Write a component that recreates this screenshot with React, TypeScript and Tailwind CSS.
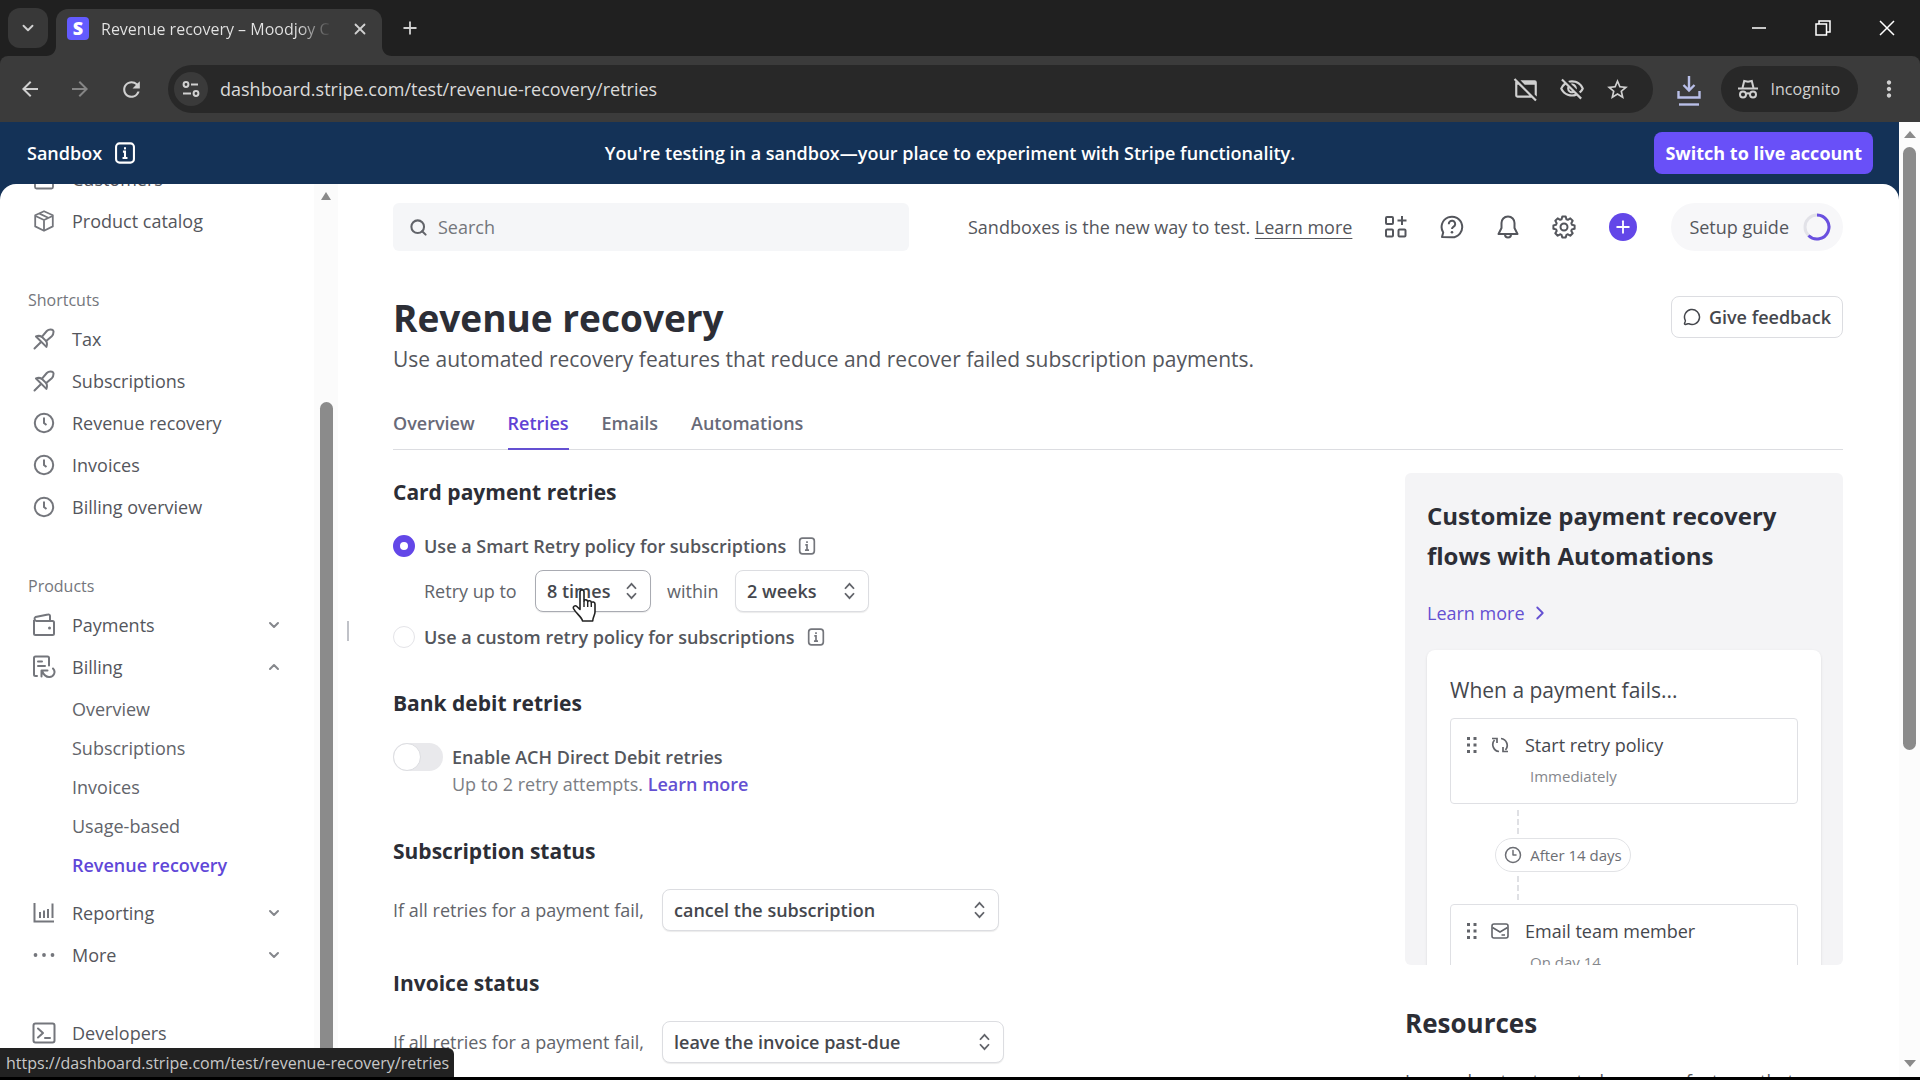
import React from "react";
import {
  MdArrowBack,
  MdArrowForward,
  MdRefresh,
  MdWebAssetOff,
  MdOutlineVisibilityOff,
  MdStarOutline,
  MdMoreVert,
} from "react-icons/md";
import { ChevronDown, ChevronRight, ChevronUp, Clock3, MessageCircle, Plus, Search, X } from "lucide-react";

type IconProps = { className?: string };

function InfoIcon({ className = "" }: IconProps) {
  return (
    <svg viewBox="0 0 16 16" fill="none" stroke="currentColor" strokeWidth="1.5" className={className}>
      <rect x="1.5" y="1" width="13" height="14" rx="2.5" />
      <path d="M6.5 7H8v4.5M6.2 11.7h3.6" />
      <path d="M8 3.8v1.6" />
    </svg>
  );
}

function BoxIcon() {
  return (
    <svg viewBox="0 0 22 22" fill="none" stroke="currentColor" strokeWidth="1.8" strokeLinejoin="round" className="h-[22px] w-[22px]">
      <path d="M11 1.2l8.8 4v11.2L11 20.8l-8.8-4.4V5.2z" />
      <path d="M2.5 6L11 10l8.5-4M11 10v10.5M6.5 3.6l8.7 4.2" />
    </svg>
  );
}

function PersonIcon() {
  return (
    <svg viewBox="0 0 22 22" fill="none" stroke="currentColor" strokeWidth="1.8" className="h-[22px] w-[22px]">
      <circle cx="11" cy="6" r="4" />
      <path d="M2 14v5a1.5 1.5 0 001.5 1.5h15A1.5 1.5 0 0020 19v-5" />
    </svg>
  );
}

function PinIcon() {
  return (
    <svg viewBox="0 0 22 22" fill="none" stroke="currentColor" strokeWidth="2" strokeLinejoin="round" strokeLinecap="round" className="h-[22px] w-[22px]">
      <path d="M1.5 20.5l6.3-6.3" />
      <path d="M3 8.500c2-.9 4-.8 5.800.3l5-5.800c1.400-1.400 3.400-1.800 5.300-1.300.9.3 1.300.8 1.400 1.600.1 1.900-.3 3.600-1.700 4.900l-5.600 4.900c1 1.800 1 3.700.2 5.800z" />
      <path d="M8.800 8.800l4.400 4.300" />
    </svg>
  );
}

function ClockIcon() {
  return (
    <svg viewBox="0 0 22 22" fill="none" stroke="currentColor" strokeWidth="2" className="h-[22px] w-[22px]">
      <circle cx="11" cy="11" r="9.2" />
      <path d="M11 5.5V11l2.5 2" />
    </svg>
  );
}

function WalletIcon() {
  return (
    <svg viewBox="0 0 24 24" fill="none" stroke="currentColor" strokeWidth="2" strokeLinejoin="round" className="h-6 w-6">
      <path d="M2 7v13.500A1.500 1.500 0 003.500 22h17a1.500 1.500 0 001.500-1.500V9.500A1.500 1.500 0 0020.500 8H4.500A2.200 2.200 0 013.500 4L16 1.500a1.500 1.500 0 012 1.500v5" />
      <circle cx="17.5" cy="15" r="1.5" fill="currentColor" stroke="none" />
    </svg>
  );
}

function BillingIcon() {
  return (
    <svg viewBox="0 0 24 24" fill="none" stroke="currentColor" strokeWidth="2" strokeLinecap="round" strokeLinejoin="round" className="h-6 w-6">
      <path d="M5 21H3.500A1.500 1.500 0 012 19.500V3a1.500 1.500 0 011.500-1.500h12A1.500 1.500 0 0117 3v7.500" />
      <path d="M6 6.5h4M6 11h7" />
      <path d="M9.5 21.5v-6h6M10 16c1.500 3.500 3.500 6 7 6a5 5 0 004-8.500" />
    </svg>
  );
}

function ReportIcon() {
  return (
    <svg viewBox="0 0 22 22" fill="none" stroke="currentColor" strokeWidth="2" className="h-[22px] w-[22px]">
      <path d="M1.5 1v18.500H21M7 16v-6M11 16V8.500M15 16V7M19.500 16V1.500" />
    </svg>
  );
}

function DotsIcon() {
  return (
    <svg viewBox="0 0 22 22" fill="currentColor" className="h-[22px] w-[22px]">
      <circle cx="2.5" cy="11" r="1.9" />
      <circle cx="11" cy="11" r="1.9" />
      <circle cx="19.5" cy="11" r="1.9" />
    </svg>
  );
}

function TerminalIcon() {
  return (
    <svg viewBox="0 0 24 24" fill="none" stroke="currentColor" strokeWidth="2" strokeLinecap="round" strokeLinejoin="round" className="h-6 w-6">
      <rect x="1.5" y="2.5" width="21" height="19" rx="2" />
      <path d="M6 7.5l5 4.5-5 4.5M13 17h5" />
    </svg>
  );
}

function AppsIcon() {
  return (
    <svg viewBox="0 0 24 24" fill="none" stroke="currentColor" strokeWidth="2" className="h-6 w-6">
      <rect x="2" y="2" width="7" height="7" rx="1" />
      <rect x="2" y="14.5" width="7" height="7" rx="1" />
      <rect x="14.5" y="14.5" width="7" height="7" rx="1" />
      <path d="M18 1v9M13.5 5.500h9" />
    </svg>
  );
}

function HelpIcon() {
  return (
    <svg viewBox="0 0 24 24" fill="none" stroke="currentColor" strokeWidth="2" strokeLinejoin="round" className="h-6 w-6">
      <path d="M2 22l1.200-4.500A10.300 10.300 0 1112 22.300z" />
      <path d="M8.800 9.200a3.200 3.200 0 116 1.300c-.6 1.200-2.800 1.500-2.800 3.500" />
      <circle cx="12" cy="17.3" r="1.3" fill="currentColor" stroke="none" />
    </svg>
  );
}

function BellIcon() {
  return (
    <svg viewBox="0 0 24 24" fill="none" stroke="currentColor" strokeWidth="2" strokeLinejoin="round" className="h-6 w-6">
      <path d="M12 1.500c-4 0-6.500 3-6.500 6.500v5L2.500 19h19l-3-6V8c0-3.500-2.500-6.500-6.500-6.500z" />
      <path d="M9 19.5a3 3 0 006 0" />
    </svg>
  );
}

function GearIcon() {
  return (
    <svg viewBox="0 0 24 24" fill="none" stroke="currentColor" strokeWidth="2" strokeLinejoin="round" className="h-6 w-6">
      <path d="M10.300 1.500h3.400l.7 2.700 1.500.6 2.400-1.400 2.400 2.400-1.400 2.400.6 1.500 2.700.7v3.300l-2.700.7-.6 1.500 1.400 2.400-2.400 2.400-2.400-1.400-1.500.6-.7 2.700h-3.400l-.7-2.700-1.500-.6-2.400 1.400-2.400-2.400 1.400-2.400-.6-1.500-2.700-.7v-3.300l2.700-.7.6-1.500-1.400-2.400 2.400-2.400 2.400 1.400 1.500-.6z" />
      <circle cx="12" cy="12" r="3.5" />
    </svg>
  );
}

function SortIcon({ className = "" }: IconProps) {
  return (
    <svg viewBox="0 0 14 20" fill="none" stroke="currentColor" strokeWidth="2" className={className}>
      <path d="M2 7.5L7 2l5 5.500M2 12.500L7 18l5-5.500" />
    </svg>
  );
}

function GripIcon() {
  return (
    <svg viewBox="0 0 10 16" fill="currentColor" className="h-4 w-[10px]">
      <path d="M0 0h3v3H0zM6.500 0h3v3h-3zM0 6.500h3v3H0zM6.500 6.500h3v3h-3zM0 13h3v3H0zM6.500 13h3v3h-3z" />
    </svg>
  );
}

function RetryIcon() {
  return (
    <svg viewBox="0 0 18 18" fill="none" stroke="currentColor" strokeWidth="1.7" className="h-[18px] w-[18px]">
      <path d="M8 15.500A7 7 0 013.500 4M1 2.500h5V7M10 2.500A7 7 0 0114.500 14M17 15.500h-5V11" />
    </svg>
  );
}

function MailIcon() {
  return (
    <svg viewBox="0 0 18 18" fill="none" stroke="currentColor" strokeWidth="1.6" className="h-[18px] w-[18px]">
      <rect x="1" y="2" width="16" height="14" rx="2" />
      <path d="M1.5 5.500L9 10l7.500-4.500M10.500 13H14" />
    </svg>
  );
}

function IncognitoIcon() {
  return (
    <svg viewBox="0 0 22 22" fill="none" stroke="currentColor" strokeWidth="2" className="h-[22px] w-[22px]">
      <path d="M1 10.500h20" />
      <path d="M5.500 10L7.200 3l3.800.8 3.800-.8 1.700 7" />
      <circle cx="6" cy="16.5" r="3" />
      <circle cx="16" cy="16.5" r="3" />
      <path d="M9 16c1.300-.9 2.700-.9 4 0" />
    </svg>
  );
}

function HandCursor() {
  return (
    <svg viewBox="0 0 26 34" className="pointer-events-none absolute top-[19px] left-[37px] h-[34px] w-[26px]">
      <path
        d="M8 3c0-2.600 4-2.600 4 0v9c.6-1.800 3.600-1.500 3.700.6.8-1.400 3.500-1 3.600 1 1-1.200 3.700-.7 3.700 1.500V23c0 3-2 4.500-2.300 9H10.500C10 28 3.500 24 1.500 19.500c-.8-2.200 1.700-3.600 3.400-2L8 20.500z"
        fill="#fff"
        stroke="#222"
        strokeWidth="1.6"
        strokeLinejoin="round"
      />
      <path d="M12 12v6M15.700 13v5M19.300 14v4" stroke="#222" strokeWidth="1.4" />
    </svg>
  );
}

function BrowserChrome() {
  return (
    <header className="shrink-0 bg-[#202020] text-[#d0d0d0]">
      <div className="flex h-14 items-end">
        <button aria-label="Search tabs" className="mb-2 ml-2 flex h-10 w-10 items-center justify-center rounded-xl bg-[#383838]">
          <ChevronDown size={18} strokeWidth={2.5} />
        </button>
        <div className="relative ml-2 flex h-[47px] w-[326px] items-center rounded-t-xl bg-[#3b3b3b] pr-[13px] pb-2 pl-[11px]">
          <svg viewBox="0 0 10 10" className="absolute bottom-0 -left-[10px] h-[10px] w-[10px] fill-[#3b3b3b]">
            <path d="M10 0v10H0C6 10 10 6 10 0z" />
          </svg>
          <svg viewBox="0 0 10 10" className="absolute -right-[10px] bottom-0 h-[10px] w-[10px] fill-[#3b3b3b]">
            <path d="M0 0v10h10C4 10 0 6 0 0z" />
          </svg>
          <span className="flex h-[23px] w-[22px] items-center justify-center rounded-sm bg-[#635bff] text-[18px] font-extrabold text-white">S</span>
          <span className="ml-3 w-[232px] overflow-hidden bg-linear-to-r from-[#e4e4e4] from-85% to-[#3b3b3b] bg-clip-text text-[16px] whitespace-nowrap text-transparent">
            Revenue recovery – Moodjoy C
          </span>
          <button aria-label="Close tab" className="ml-auto">
            <X size={18} strokeWidth={2.4} />
          </button>
        </div>
        <button aria-label="New tab" className="mb-[18px] ml-[18px]">
          <Plus size={20} strokeWidth={2.2} />
        </button>
        <div className="mb-[19px] ml-auto flex items-center gap-[46px] pr-6">
          <button aria-label="Minimize">
            <svg viewBox="0 0 18 18" stroke="#fff" strokeWidth="1.5" className="h-[18px] w-[18px]">
              <path d="M2 9h14" />
            </svg>
          </button>
          <button aria-label="Restore">
            <svg viewBox="0 0 18 18" fill="none" stroke="#fff" strokeWidth="1.5" className="h-[18px] w-[18px]">
              <path d="M2 5h10.500v11H2zM5 5V2h11v11h-3.500" />
            </svg>
          </button>
          <button aria-label="Close window">
            <svg viewBox="0 0 18 18" stroke="#fff" strokeWidth="1.5" className="h-[18px] w-[18px]">
              <path d="M2 2l14 14M16 2L2 16" />
            </svg>
          </button>
        </div>
      </div>
      <div className="flex h-[66px] items-center rounded-t-lg bg-[#3b3b3b] pr-[18px] pl-[18px]">
        <button aria-label="Back">
          <MdArrowBack size={24} />
        </button>
        <button aria-label="Forward" className="ml-[26px] text-[#858585]">
          <MdArrowForward size={24} />
        </button>
        <button aria-label="Reload" className="ml-[27px]">
          <MdRefresh size={25} />
        </button>
        <div className="ml-6 flex h-12 flex-1 items-center rounded-full bg-[#282828] pr-[23px] pl-[6px]">
          <span className="flex h-[34px] w-[34px] items-center justify-center rounded-full bg-[#3a3a3a]">
            <svg viewBox="0 0 20 20" fill="none" stroke="currentColor" strokeWidth="2" className="h-5 w-5">
              <circle cx="5" cy="5.5" r="2.4" />
              <path d="M10 5.500h7M2 14.500h8" />
              <circle cx="15" cy="14.5" r="2.4" />
            </svg>
          </span>
          <input
            type="text"
            aria-label="Address"
            defaultValue="dashboard.stripe.com/test/revenue-recovery/retries"
            className="ml-3 flex-1 bg-transparent text-[18px] text-[#dadada] outline-none"
          />
          <div className="flex items-center gap-5">
            <MdWebAssetOff size={26} />
            <MdOutlineVisibilityOff size={26} />
            <MdStarOutline size={25} />
          </div>
        </div>
        <button aria-label="Downloads" className="ml-6 text-[#b9bfe8]">
          <svg viewBox="0 0 24 30" fill="none" stroke="currentColor" strokeWidth="2.4" className="mt-1 h-[30px] w-6">
            <path d="M12 0v14M6.500 9l5.500 5.500L17.500 9M1.500 15v6.500h21V15" />
            <path d="M2 28.500h20" />
          </svg>
        </button>
        <span className="ml-5 flex h-[46px] items-center gap-3 rounded-full bg-[#282828] pr-[18px] pl-4 text-[16px]">
          <IncognitoIcon />
          Incognito
        </span>
        <button aria-label="Menu" className="ml-[18px]">
          <MdMoreVert size={26} />
        </button>
      </div>
    </header>
  );
}

const shortcuts = [
  { label: "Tax", icon: <PinIcon /> },
  { label: "Subscriptions", icon: <PinIcon /> },
  { label: "Revenue recovery", icon: <ClockIcon /> },
  { label: "Invoices", icon: <ClockIcon /> },
  { label: "Billing overview", icon: <ClockIcon /> },
];

const billingLinks = ["Overview", "Subscriptions", "Invoices", "Usage-based", "Revenue recovery"];

function NavItem({ label, icon, open }: { label: string; icon: React.ReactNode; open?: boolean }) {
  return (
    <a href="#" className="flex h-[42px] items-center pr-8 text-[18px] text-[#54565c]">
      <span className="mr-4 flex w-6 justify-center text-[#74767c]">{icon}</span>
      {label}
      {open === false && <ChevronDown size={16} strokeWidth={3} className="ml-auto text-[#85878c]" />}
      {open === true && <ChevronUp size={16} strokeWidth={3} className="ml-auto text-[#85878c]" />}
    </a>
  );
}

function Sidebar() {
  return (
    <aside className="flex w-[338px] shrink-0">
      <nav className="-mt-[26px] flex-1 pl-8">
        <NavItem label="Customers" icon={<PersonIcon />} />
        <NavItem label="Product catalog" icon={<BoxIcon />} />
        <h2 className="mt-10 -ml-1 flex h-9 items-center text-[16px] text-[#74767c]">Shortcuts</h2>
        {shortcuts.map((s) => (
          <NavItem key={s.label} label={s.label} icon={s.icon} />
        ))}
        <h2 className="mt-10 -ml-1 flex h-9 items-center text-[16px] text-[#74767c]">Products</h2>
        <NavItem label="Payments" icon={<WalletIcon />} open={false} />
        <NavItem label="Billing" icon={<BillingIcon />} open={true} />
        <div className="pt-0.5 pb-[7px] pl-10">
          {billingLinks.map((label) => (
            <a
              key={label}
              href="#"
              className={
                label === "Revenue recovery"
                  ? "flex h-[39px] items-center text-[18px] font-semibold text-[#6047d8]"
                  : "flex h-[39px] items-center text-[18px] text-[#62646a]"
              }
            >
              {label}
            </a>
          ))}
        </div>
        <NavItem label="Reporting" icon={<ReportIcon />} open={false} />
        <NavItem label="More" icon={<DotsIcon />} open={false} />
        <div className="mt-9">
          <NavItem label="Developers" icon={<TerminalIcon />} />
        </div>
      </nav>
      <div className="flex w-6 flex-col items-center bg-[#fbfbfb] pt-2">
        <svg viewBox="0 0 10 8" className="h-2 w-[10px] fill-[#8a8a8a]">
          <path d="M5 0l5 8H0z" />
        </svg>
        <div className="mt-[202px] w-[13px] flex-1 rounded-t-full bg-[#8b8b8b]" />
      </div>
    </aside>
  );
}

function TopBar() {
  return (
    <div className="flex h-12 items-center text-[#54565c]">
      <label className="flex h-12 w-[516px] items-center rounded-md bg-[#f5f6f8] px-4">
        <Search size={19} strokeWidth={2.6} className="text-[#62646a]" />
        <input type="search" placeholder="Search" aria-label="Search" className="ml-[10px] flex-1 bg-transparent text-[18px] outline-none placeholder:text-[#74767c]" />
      </label>
      <p className="ml-auto text-[18px] whitespace-nowrap">
        Sandboxes is the new way to test.{" "}
        <a href="#" className="underline underline-offset-4">
          Learn more
        </a>
      </p>
      <div className="ml-8 flex items-center gap-8">
        <button aria-label="Apps">
          <AppsIcon />
        </button>
        <button aria-label="Help">
          <HelpIcon />
        </button>
        <button aria-label="Notifications">
          <BellIcon />
        </button>
        <button aria-label="Settings">
          <GearIcon />
        </button>
      </div>
      <button aria-label="Create" className="ml-[33px] flex h-7 w-7 items-center justify-center rounded-full bg-[#6347e8] text-white">
        <Plus size={20} strokeWidth={2.2} />
      </button>
      <button className="ml-[34px] flex h-12 items-center gap-[14px] rounded-full bg-[#f7f7f9] pr-3 pl-[18px] text-[18px] whitespace-nowrap">
        Setup guide
        <svg viewBox="0 0 28 28" fill="none" strokeWidth="3" className="h-7 w-7">
          <circle cx="14" cy="14" r="12" stroke="#e2e2e8" />
          <path d="M14 2a12 12 0 11-8.500 20.500" stroke="#6a50e0" />
        </svg>
      </button>
    </div>
  );
}

type PickerProps = { id: string; label: string; options: string[]; width: string; hover?: boolean };

function Picker({ id, label, options, width, hover }: PickerProps) {
  return (
    <div className={`relative grid ${width}`}>
      <select
        id={id}
        aria-label={label}
        className={`col-start-1 row-start-1 h-[42px] w-full appearance-none rounded-lg border bg-white pl-[11px] text-[18px] font-semibold text-[#45474d] shadow-[0_1px_1px_rgba(0,0,0,0.08)] ${
          hover ? "border-[#a9abb2]" : "border-[#dcdde1]"
        }`}
      >
        {options.map((o) => (
          <option key={o}>{o}</option>
        ))}
      </select>
      <SortIcon className="pointer-events-none col-start-1 row-start-1 mr-[13px] h-[18px] w-[13px] self-center justify-self-end text-[#62646a]" />
      {hover && <HandCursor />}
    </div>
  );
}

const radioClass =
  "h-[22px] w-[22px] shrink-0 appearance-none rounded-full border border-[#e4e4e8] bg-white checked:border-[7px] checked:border-[#6347e8]";

function RetrySettings() {
  return (
    <div className="flex-1 pt-6 text-[18px] text-[#54565c]">
      <h2 className="text-[21px] leading-9 font-bold text-[#2c2e36]">Card payment retries</h2>
      <div className="mt-6 flex h-6 items-center">
        <input type="radio" name="policy" id="smart" defaultChecked className={radioClass} />
        <label htmlFor="smart" className="ml-[9px] font-semibold text-[#54565c]">
          Use a Smart Retry policy for subscriptions
        </label>
        <InfoIcon className="ml-3 h-[18px] w-[18px] text-[#74767c]" />
      </div>
      <div className="mt-3 flex items-center pl-[31px]">
        <label htmlFor="times" className="w-[111px] text-[#62646a]">
          Retry up to
        </label>
        <Picker id="times" label="Retry up to" options={["8 times", "4 times"]} width="w-[116px]" hover />
        <label htmlFor="weeks" className="w-[84px] pl-4 text-[#62646a]">
          within
        </label>
        <Picker id="weeks" label="within" options={["2 weeks", "1 week"]} width="w-[134px]" />
      </div>
      <div className="mt-[13px] flex h-6 items-center">
        <input type="radio" name="policy" id="custom" className={radioClass} />
        <label htmlFor="custom" className="ml-[9px] font-semibold text-[#54565c]">
          Use a custom retry policy for subscriptions
        </label>
        <InfoIcon className="ml-3 h-[18px] w-[18px] text-[#74767c]" />
      </div>

      <h2 className="mt-9 text-[21px] leading-9 font-bold text-[#2c2e36]">Bank debit retries</h2>
      <div className="mt-[22px] flex">
        <input
          type="checkbox"
          role="switch"
          id="ach"
          className="h-7 w-[50px] shrink-0 appearance-none rounded-full bg-[#e9e9ec] before:block before:h-7 before:w-7 before:rounded-full before:border before:border-[#dcdde1] before:bg-white checked:before:ml-auto"
        />
        <div className="ml-[9px]">
          <label htmlFor="ach" className="block leading-7 font-semibold text-[#54565c]">
            Enable ACH Direct Debit retries
          </label>
          <p className="leading-[26px] text-[#7c7e84]">
            Up to 2 retry attempts.{" "}
            <a href="#" className="font-semibold text-[#6450d2]">
              Learn more
            </a>
          </p>
        </div>
      </div>

      <h2 className="mt-9 text-[21px] leading-9 font-bold text-[#2c2e36]">Subscription status</h2>
      <div className="mt-5 flex items-center">
        <label htmlFor="sub" className="w-[269px] whitespace-nowrap text-[#62646a]">
          If all retries for a payment fail,
        </label>
        <Picker id="sub" label="Subscription status" options={["cancel the subscription", "mark as unpaid"]} width="w-[337px]" />
      </div>

      <h2 className="mt-[34px] text-[21px] leading-9 font-bold text-[#2c2e36]">Invoice status</h2>
      <div className="mt-5 flex items-center">
        <label htmlFor="inv" className="w-[269px] whitespace-nowrap text-[#62646a]">
          If all retries for a payment fail,
        </label>
        <Picker id="inv" label="Invoice status" options={["leave the invoice past-due", "mark as uncollectible"]} width="w-[342px]" />
      </div>
    </div>
  );
}

function StepCard({ icon, title, when }: { icon: React.ReactNode; title: string; when: string }) {
  return (
    <div className="h-[86px] rounded border border-[#dfe0e4] px-4 pt-[10px]">
      <div className="flex h-8 items-center text-[#62646a]">
        <GripIcon />
        <span className="mr-4 ml-[14px]">{icon}</span>
        <span className="text-[18px] text-[#45474d]">{title}</span>
      </div>
      <p className="ml-[63px] text-[15px] leading-[30px] text-[#85878c]">{when}</p>
    </div>
  );
}

function Aside() {
  return (
    <aside className="w-[438px] shrink-0 pt-[23px]">
      <div className="h-[492px] overflow-hidden rounded-md bg-[#f4f4f6] px-[22px] pt-[23px]">
        <h2 className="text-[24px] leading-10 font-bold text-[#2c2e36]">Customize payment recovery flows with Automations</h2>
        <a href="#" className="mt-[21px] flex items-center gap-1 text-[18px] leading-8 text-[#6450d2]">
          Learn more
          <ChevronRight size={22} />
        </a>
        <div className="mt-[21px] rounded-t-lg bg-white px-[23px] pt-6 shadow-sm">
          <h3 className="text-[21px] leading-8 font-medium text-[#45474d]">When a payment fails...</h3>
          <div className="mt-3">
            <StepCard icon={<RetryIcon />} title="Start retry policy" when="Immediately" />
          </div>
          <div className="mt-[6px] ml-[67px] h-6 border-l-2 border-dashed border-[#dfe0e4]" />
          <span className="my-1 ml-[45px] flex h-[34px] w-[136px] items-center justify-center gap-2 rounded-full border border-[#e2e3e6] text-[15px] whitespace-nowrap text-[#6c6e74]">
            <Clock3 size={18} />
            After 14 days
          </span>
          <div className="mb-1 ml-[67px] h-6 border-l-2 border-dashed border-[#dfe0e4]" />
          <StepCard icon={<MailIcon />} title="Email team member" when="On day 14" />
        </div>
      </div>
      <h2 className="mt-10 text-[26px] leading-9 font-bold text-[#2c2e36]">Resources</h2>
      <p className="mt-7 text-[18px] leading-6 whitespace-nowrap text-[#54565c]">Learn about automated recovery features that</p>
    </aside>
  );
}

function RevenueRecovery() {
  return (
    <main className="min-w-0 flex-1 pt-[19px] pr-14 pl-[35px]">
      <TopBar />
      <div className="mt-[43px] flex items-start">
        <div className="flex-1">
          <h1 className="text-[37px] leading-[48px] font-bold text-[#2c2e36]">Revenue recovery</h1>
          <p className="mt-0.5 text-[21px] leading-[30px] text-[#54565c]">Use automated recovery features that reduce and recover failed subscription payments.</p>
        </div>
        <button className="mt-0.5 flex h-[42px] items-center gap-2 rounded-lg border border-[#dcdde1] px-[11px] text-[18px] font-semibold whitespace-nowrap text-[#45474d]">
          <MessageCircle size={18} />
          Give feedback
        </button>
      </div>
      <nav className="mt-[34px] flex h-[42px] gap-[33px] border-b border-[#dcdde1] text-[18px] font-semibold text-[#686a78]">
        <a href="#" className="leading-[30px]">Overview</a>
        <a href="#" className="h-[42px] border-b-2 border-[#6450d2] leading-[30px] text-[#6042d4]">Retries</a>
        <a href="#" className="leading-[30px]">Emails</a>
        <a href="#" className="leading-[30px]">Automations</a>
      </nav>
      <div className="flex">
        <RetrySettings />
        <Aside />
      </div>
    </main>
  );
}

export default function App() {
  return (
    <div className="flex h-screen flex-col overflow-hidden border-b-[3px] border-black bg-white font-['Open_Sans','Noto_Sans',sans-serif]">
      <BrowserChrome />
      <div className="flex min-h-0 flex-1">
        <div className="flex min-w-0 flex-1 flex-col bg-[#143257]">
          <div className="grid h-[62px] shrink-0 grid-cols-[1fr_auto_1fr] items-center pr-[26px] pl-[27px] text-[18px] font-semibold text-white">
            <span className="flex items-center gap-3">
              Sandbox
              <InfoIcon className="h-[22px] w-[22px]" />
            </span>
            <span className="whitespace-nowrap">You're testing in a sandbox—your place to experiment with Stripe functionality.</span>
            <button className="h-[42px] justify-self-end rounded-lg bg-[#6950f8] px-[11px] font-bold">Switch to live account</button>
          </div>
          <div className="flex min-h-0 flex-1 overflow-hidden rounded-t-2xl bg-white">
            <Sidebar />
            <div className="flex w-5 items-center justify-center">
              <div className="h-5 w-0.5 bg-[#c0c2c8]" />
            </div>
            <RevenueRecovery />
          </div>
        </div>
        <div className="flex w-[21px] shrink-0 flex-col items-center bg-[#fcfcfc] pt-[9px] pb-[10px]">
          <svg viewBox="0 0 12 7" className="h-[7px] w-3 fill-[#8a8a8a]">
            <path d="M6 0l6 7H0z" />
          </svg>
          <div className="mt-[9px] h-[603px] w-[13px] rounded-full bg-[#8b8b8b]" />
          <svg viewBox="0 0 12 7" className="mt-auto h-[7px] w-3 fill-[#8a8a8a]">
            <path d="M0 0h12L6 7z" />
          </svg>
        </div>
      </div>
      <div className="fixed bottom-[3px] left-0 flex h-[29px] items-center rounded-tr-md bg-[#222] pr-[5px] pl-[6px] text-[16px] text-[#c8c8c8]">
        https://dashboard.stripe.com/test/revenue-recovery/retries
      </div>
    </div>
  );
}
